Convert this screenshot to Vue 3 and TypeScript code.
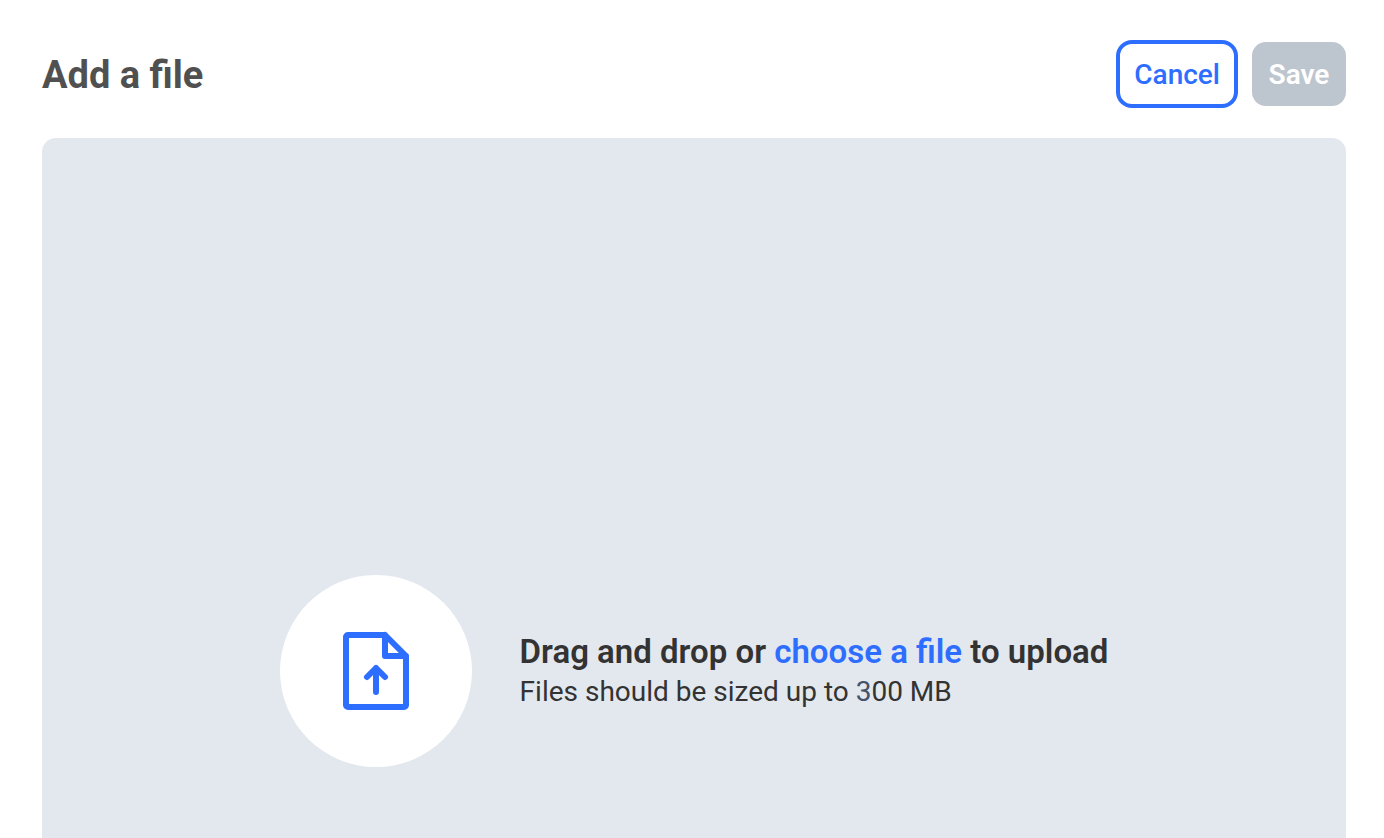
<script setup lang="ts">
import { ref } from 'vue'

const maxSize = ref('3')
const picker = ref<HTMLInputElement | null>(null)

function openPicker(): void {
  picker.value?.click()
}
</script>

<template>
  <main class="page">
    <header class="header">
      <h1 class="title">Add a file</h1>
      <div class="actions">
        <button type="button" class="button cancel">Cancel</button>
        <button type="button" class="button save" disabled>Save</button>
      </div>
    </header>

    <section class="dropzone" aria-label="File upload">
      <div class="badge">
        <svg class="icon" viewBox="0 0 96 96" aria-hidden="true">
          <path d="M57 12H20a2 2 0 0 0-2 2V82a2 2 0 0 0 2 2H76a2 2 0 0 0 2-2V33L57 12V33H78" />
          <path d="M39 54L48 45L57 54M48 45V69" />
        </svg>
      </div>
      <div class="copy">
        <p class="prompt">Drag and drop or <button type="button" class="choose" @click="openPicker">choose a file</button> to upload</p>
        <p class="hint">Files should be sized up to <span class="amount">{{ maxSize }}</span>00 MB</p>
        <input ref="picker" type="file" aria-label="Choose a file" hidden />
      </div>
    </section>
  </main>
</template>

<style>
body {
  margin: 0;
  background: #fff;
}
</style>

<style scoped>
.page {
  box-sizing: border-box;
  height: 100vh;
  overflow: hidden;
  padding: 42px 38px 0 42px;
  font-family: Roboto, "Noto Sans", sans-serif;
  color: #333;
}

.header {
  display: flex;
  align-items: center;
  justify-content: space-between;
  margin-bottom: 32px;
}

.title {
  margin: 0;
  padding-top: 2px;
  font-size: 38px;
  line-height: 48px;
  font-weight: 700;
  color: #505050;
}

.actions {
  display: flex;
  gap: 16px;
}

.button {
  box-sizing: border-box;
  height: 64px;
  min-width: 94px;
  padding: 2px 16px 0;
  border: 0;
  border-radius: 14px;
  font: inherit;
  font-size: 28px;
  line-height: 36px;
}

.cancel {
  padding: 2px 14px 0;
  border: 2px solid #2e6eff;
  box-shadow: 0 0 0 2px #2e6eff;
  background: #fff;
  color: #2e6eff;
  font-weight: 500;
}

.save {
  background: #bdc5cf;
  color: #fff;
  font-weight: 600;
}

.dropzone {
  box-sizing: border-box;
  display: flex;
  align-items: center;
  justify-content: center;
  gap: 48px;
  min-height: 1066px;
  border-radius: 14px;
  background: #e3e8ef;
}

.badge {
  display: flex;
  flex: none;
  align-items: center;
  justify-content: center;
  width: 192px;
  height: 192px;
  border-radius: 50%;
  background: #fff;
}

.icon {
  width: 96px;
  height: 96px;
  fill: none;
  stroke: #2e6eff;
  stroke-width: 6;
  stroke-linecap: round;
  stroke-linejoin: round;
}

.copy {
  padding-top: 2px;
}

.prompt,
.hint {
  margin: 0;
}

.prompt {
  font-size: 33px;
  line-height: 40px;
  font-weight: 600;
}

.choose {
  padding: 0;
  border: 0;
  background: none;
  font: inherit;
  color: #2e6eff;
  cursor: pointer;
}

.hint {
  font-size: 28px;
  line-height: 40px;
}

.amount {
  color: #45526b;
}
</style>
